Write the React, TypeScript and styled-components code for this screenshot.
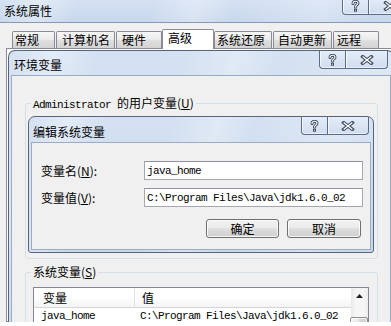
import React from 'react';
import styled, { createGlobalStyle } from 'styled-components';

const CJK = `"Noto Sans CJK SC", "Noto Sans", sans-serif`;
const MONO = `"Liberation Mono", "DejaVu Sans Mono", monospace`;
const CAPTION_BG = `linear-gradient(105deg, rgba(255,255,255,0) 0%, rgba(255,255,255,0.35) 10%, rgba(255,255,255,0) 20%, rgba(255,255,255,0) 38%, rgba(255,255,255,0.3) 50%, rgba(255,255,255,0) 60%, rgba(255,255,255,0.25) 82%, rgba(255,255,255,0) 94%), linear-gradient(#d4e1f2, #c7d7ec)`;
const GLYPH_DARK = '#3f4b5e';

const GlobalStyle = createGlobalStyle`
  html, body { margin: 0; padding: 0; background: #ffffff; }
  body { font-family: ${CJK}; font-size: 12px; color: #000; }
  *, *::before, *::after { box-sizing: border-box; }
`;

const Desktop = styled.div`
  position: relative;
  width: 391px;
  height: 322px;
  overflow: hidden;
  background: #f0f0f0;
`;

const Window = styled.div`
  display: flex;
  flex-direction: column;
  width: 391px;
  height: 100%;
`;

const MainTitleBar = styled.div`
  display: flex;
  align-items: flex-start;
  height: 23px;
  padding-left: 4px;
  background: ${CAPTION_BG};
  border-bottom: 1px solid #8898b0;
  flex-shrink: 0;
`;

const TitleText = styled.span<{ $pt: number; $lh: number }>`
  padding-top: ${(p) => p.$pt}px;
  line-height: ${(p) => p.$lh}px;
  font-size: 12px;
  color: #000;
  white-space: nowrap;
`;

const CaptionGroup = styled.div<{ $mt: number; $mr: number }>`
  display: flex;
  margin-left: auto;
  margin-top: ${(p) => p.$mt}px;
  margin-right: ${(p) => p.$mr}px;
  flex-shrink: 0;
`;

const CaptionBtn = styled.div<{ $w: number; $h: number; $first?: boolean }>`
  width: ${(p) => p.$w}px;
  height: ${(p) => p.$h}px;
  display: flex;
  align-items: center;
  justify-content: center;
  border: 1px solid #5b6c86;
  border-top: none;
  ${(p) => (p.$first ? 'border-radius: 0 0 0 4px; border-right: none;' : 'border-radius: 0 0 4px 0;')}
  background: linear-gradient(#e4edf8, #d0ddef);
  box-shadow: inset 1px 0 0 rgba(255, 255, 255, 0.7), inset 0 -1px 0 rgba(255, 255, 255, 0.5);
`;

const MainClient = styled.div`
  flex: 1;
  display: flex;
  flex-direction: column;
  padding: 6px 0 0 6px;
  background: #f0f0f0;
`;

const TabStrip = styled.div`
  display: flex;
  align-items: flex-end;
  height: 19px;
  padding-left: 6px;
  position: relative;
  z-index: 1;
  flex-shrink: 0;
`;

const Tab = styled.div<{ $w: number; $pad: number; $gap: number; $active?: boolean }>`
  width: ${(p) => p.$w}px;
  margin-right: ${(p) => p.$gap}px;
  padding-left: ${(p) => p.$pad}px;
  border: 1px solid #898c95;
  border-bottom: none;
  border-radius: 2px 2px 0 0;
  font-size: 12px;
  line-height: 15px;
  white-space: nowrap;
  flex-shrink: 0;
  ${(p) =>
    p.$active
      ? 'height: 20px; margin-bottom: -1px; background: #ffffff;'
      : 'height: 17px; background: linear-gradient(#f6f6f6 0%, #ececec 45%, #dedede 55%, #d3d3d3 100%);'}
`;

const TabPanel = styled.div`
  flex: 1;
  border: 1px solid #898c95;
  background: #fcfcfc;
  margin-right: -10px;
`;

const DialogFrame = styled.div<{ $x: number; $y: number; $w: number; $h: number; $open?: boolean }>`
  position: absolute;
  left: ${(p) => p.$x}px;
  top: ${(p) => p.$y}px;
  width: ${(p) => p.$w}px;
  height: ${(p) => p.$h}px;
  display: flex;
  flex-direction: column;
  border: 1px solid #566579;
  border-radius: ${(p) => (p.$open ? '7px 7px 0 0' : '7px 7px 3px 3px')};
  ${(p) => (p.$open ? 'border-bottom: none;' : '')}
  background: ${CAPTION_BG};
`;

const DialogTitleBar = styled.div<{ $h: number; $pl: number }>`
  display: flex;
  align-items: flex-start;
  height: ${(p) => p.$h}px;
  padding-left: ${(p) => p.$pl}px;
  flex-shrink: 0;
`;

const ClientArea = styled.div`
  flex: 1;
  min-height: 0;
  margin: 0 2px;
  border: 1px solid #9aabc2;
  background: #f0f0f0;
  display: flex;
  flex-direction: column;
`;

const EnvClient = styled(ClientArea)`
  border-bottom: none;
  padding: 20px 12px 0 13px;
  overflow: hidden;
`;

const EditClient = styled(ClientArea)`
  margin-bottom: 2px;
  padding: 18px 9px 0 9px;
`;

const GroupBox = styled.fieldset<{ $h?: number; $pt: number; $mt?: number }>`
  margin: ${(p) => p.$mt ?? 0}px 0 0 0;
  border: 1px solid #d5dfe5;
  border-radius: 3px;
  padding: ${(p) => p.$pt}px 8px 0 7px;
  min-width: 0;
  flex-shrink: 0;
  ${(p) => (p.$h ? `height: ${p.$h}px;` : 'flex: 1;')}
`;

const Legend = styled.legend`
  padding: 0 2px;
  margin-left: -2px;
  height: 14px;
  line-height: 14px;
  font-size: 12px;
  white-space: nowrap;
`;

const Mono = styled.span`
  font-family: ${MONO};
  font-size: 11px;
  letter-spacing: -0.6px;
`;

const FieldRow = styled.div`
  display: flex;
  align-items: center;
  height: 19px;
  & + & {
    margin-top: 8px;
  }
`;

const FieldLabel = styled.label`
  width: 103px;
  flex-shrink: 0;
  font-size: 12px;
  line-height: 16px;
  white-space: nowrap;
`;

const TextInput = styled.input`
  width: 219px;
  height: 19px;
  margin: 0 -2px 0 0;
  padding: 0 2px;
  border: 1px solid #a3a8b0;
  border-top-color: #8f959e;
  border-radius: 0;
  background: #ffffff;
  font-family: ${MONO};
  font-size: 11px;
  letter-spacing: -0.6px;
  color: #000;
  outline: none;
`;

const ButtonRow = styled.div`
  display: flex;
  justify-content: flex-end;
  gap: 8px;
  margin-top: 12px;
`;

const PushButton = styled.button<{ $w: number }>`
  width: ${(p) => p.$w}px;
  height: 19px;
  padding: 0 0 1px 0;
  border: 1px solid #707070;
  border-radius: 3px;
  background: linear-gradient(#f2f2f2 0%, #ebebeb 45%, #dddddd 52%, #cfcfcf 100%);
  box-shadow: inset 0 0 0 1px rgba(255, 255, 255, 0.8);
  font-family: ${CJK};
  font-size: 12px;
  line-height: 15px;
  color: #000;
`;

const ListView = styled.div`
  display: flex;
  height: 60px;
  border: 1px solid #828790;
  background: #ffffff;
`;

const ListMain = styled.div`
  flex: 1;
  min-width: 0;
  display: flex;
  flex-direction: column;
`;

const ListHeader = styled.div`
  display: flex;
  height: 20px;
  border-bottom: 1px solid #d5d5d5;
  background: linear-gradient(#ffffff 0%, #ffffff 45%, #f3f4f6 100%);
`;

const HeaderCell = styled.div<{ $w?: number; $pl: number }>`
  ${(p) => (p.$w ? `width: ${p.$w}px; border-right: 1px solid #e0e1e3;` : 'flex: 1;')}
  padding-left: ${(p) => p.$pl}px;
  font-size: 12px;
  line-height: 19px;
  white-space: nowrap;
`;

const ListRow = styled.div`
  display: flex;
  height: 16px;
`;

const RowCell = styled.div<{ $w?: number; $pl: number }>`
  ${(p) => (p.$w ? `width: ${p.$w}px;` : 'flex: 1;')}
  padding-left: ${(p) => p.$pl}px;
  font-family: ${MONO};
  font-size: 11px;
  letter-spacing: -0.6px;
  line-height: 16px;
  white-space: nowrap;
  overflow: hidden;
`;

const ScrollBar = styled.div`
  width: 17px;
  flex-shrink: 0;
  display: flex;
  flex-direction: column;
  background: linear-gradient(to right, #e9e9e9, #f5f5f5 25%, #f5f5f5 75%, #ececec);
`;

const ScrollArrow = styled.div`
  height: 17px;
  display: flex;
  align-items: center;
  justify-content: center;
`;

const ScrollThumb = styled.div`
  margin-top: 13px;
  margin-left: -1px;
  height: 30px;
  border: 1px solid #8e8f8f;
  border-radius: 2px;
  background: linear-gradient(to right, #f4f4f4, #e8e8e8 50%, #d9d9d9 51%, #cfcfcf);
  box-shadow: inset 0 0 0 1px rgba(255, 255, 255, 0.7);
`;

const HelpGlyph = () => (
  <svg width="9" height="12" viewBox="0 0 9 12">
    <path
      d="M2 3.4 C2 1.9 3.2 1.3 4.5 1.3 C5.9 1.3 7 2 7 3.3 C7 4.8 4.5 5.1 4.5 7.1"
      fill="none"
      stroke={GLYPH_DARK}
      strokeWidth="3"
      strokeLinecap="round"
    />
    <path
      d="M2 3.4 C2 1.9 3.2 1.3 4.5 1.3 C5.9 1.3 7 2 7 3.3 C7 4.8 4.5 5.1 4.5 7.1"
      fill="none"
      stroke="#ffffff"
      strokeWidth="1.1"
      strokeLinecap="round"
    />
    <rect x="3" y="8.7" width="3" height="3" fill={GLYPH_DARK} />
    <rect x="4" y="9.7" width="1" height="1" fill="#ffffff" />
  </svg>
);

const CloseGlyph = () => (
  <svg width="14" height="10" viewBox="0 0 14 10">
    <path d="M2.6 1.6 L11.4 8.4 M11.4 1.6 L2.6 8.4" stroke={GLYPH_DARK} strokeWidth="3.3" strokeLinecap="square" />
    <path d="M2.6 1.6 L11.4 8.4 M11.4 1.6 L2.6 8.4" stroke="#ffffff" strokeWidth="1.3" strokeLinecap="butt" />
  </svg>
);

const UpArrow = () => (
  <svg width="7" height="4" viewBox="0 0 7 4">
    <path d="M0 4 L3.5 0 L7 4 Z" fill="#222" />
  </svg>
);

const Caption = ({ mt, mr, h, helpW, closeW }: { mt: number; mr: number; h: number; helpW: number; closeW: number }) => (
  <CaptionGroup $mt={mt} $mr={mr}>
    <CaptionBtn $w={helpW} $h={h} $first>
      <HelpGlyph />
    </CaptionBtn>
    <CaptionBtn $w={closeW} $h={h}>
      <CloseGlyph />
    </CaptionBtn>
  </CaptionGroup>
);

const tabs = [
  { label: '常规', w: 43, pad: 2, gap: 1 },
  { label: '计算机名', w: 59, pad: 5, gap: 1 },
  { label: '硬件', w: 46, pad: 5, gap: 0 },
  { label: '高级', w: 52, pad: 5, gap: 0, active: true },
  { label: '系统还原', w: 58, pad: 2, gap: 1 },
  { label: '自动更新', w: 59, pad: 4, gap: 1 },
  { label: '远程', w: 46, pad: 3, gap: 0 },
];

export default function App() {
  return (
    <>
      <GlobalStyle />
      <Desktop>
        <Window>
          <MainTitleBar>
            <TitleText $pt={0} $lh={22}>系统属性</TitleText>
            <Caption mt={-3} mr={-20} h={18} helpW={26} closeW={43} />
          </MainTitleBar>
          <MainClient>
            <TabStrip>
              {tabs.map((t) => (
                <Tab key={t.label} $w={t.w} $pad={t.pad} $gap={t.gap} $active={t.active}>
                  {t.label}
                </Tab>
              ))}
            </TabStrip>
            <TabPanel />
          </MainClient>
        </Window>

        <DialogFrame $x={8} $y={50} $w={386} $h={272} $open>
          <DialogTitleBar $h={24} $pl={5}>
            <TitleText $pt={3} $lh={21}>环境变量</TitleText>
            <Caption mt={0} mr={5} h={18} helpW={26} closeW={43} />
          </DialogTitleBar>
          <EnvClient>
            <GroupBox $h={163} $pt={0}>
              <Legend>
                <Mono>Administrator </Mono>的用户变量(<u>U</u>)
              </Legend>
            </GroupBox>
            <GroupBox $pt={8} $mt={6}>
              <Legend>
                系统变量(<u>S</u>)
              </Legend>
              <ListView>
                <ListMain>
                  <ListHeader>
                    <HeaderCell $w={101} $pl={9}>变量</HeaderCell>
                    <HeaderCell $pl={7}>值</HeaderCell>
                  </ListHeader>
                  <ListRow>
                    <RowCell $w={101} $pl={7}>java_home</RowCell>
                    <RowCell $pl={5}>C:\Program Files\Java\jdk1.6.0_02</RowCell>
                  </ListRow>
                </ListMain>
                <ScrollBar>
                  <ScrollArrow>
                    <UpArrow />
                  </ScrollArrow>
                  <ScrollThumb />
                </ScrollBar>
              </ListView>
            </GroupBox>
          </EnvClient>
        </DialogFrame>

        <DialogFrame $x={28} $y={116} $w={346} $h={137}>
          <DialogTitleBar $h={25} $pl={4}>
            <TitleText $pt={4} $lh={21}>编辑系统变量</TitleText>
            <Caption mt={0} mr={4} h={18} helpW={26} closeW={42} />
          </DialogTitleBar>
          <EditClient>
            <FieldRow>
              <FieldLabel>
                变量名(<u>N</u>):
              </FieldLabel>
              <TextInput readOnly defaultValue="java_home" />
            </FieldRow>
            <FieldRow>
              <FieldLabel>
                变量值(<u>V</u>):
              </FieldLabel>
              <TextInput readOnly defaultValue="C:\Program Files\Java\jdk1.6.0_02" />
            </FieldRow>
            <ButtonRow>
              <PushButton $w={73}>确定</PushButton>
              <PushButton $w={74}>取消</PushButton>
            </ButtonRow>
          </EditClient>
        </DialogFrame>
      </Desktop>
    </>
  );
}
